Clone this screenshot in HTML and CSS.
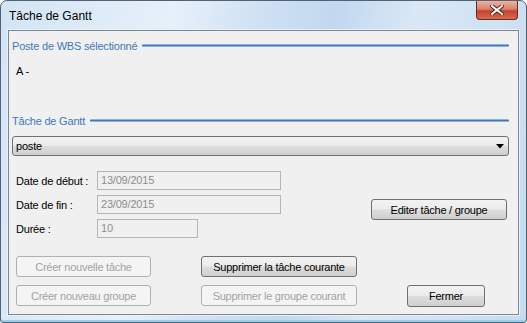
FILE: index.html
```html
<!DOCTYPE html>
<html lang="fr">
<head>
  <meta charset="UTF-8">
  <title>Tâche de Gantt</title>
  <link rel="stylesheet" href="styles.css">
</head>
<body>

<div class="window">
  <div class="titlebar">
    <span class="title">Tâche de Gantt</span>
    <button class="close-btn" title="Fermer">
      <svg width="14" height="10" viewBox="0 0 14 10">
        <path d="M2 1 L12 9 M12 1 L2 9" stroke="#5a2418" stroke-width="4" stroke-linecap="square"/>
        <path d="M2 1 L12 9 M12 1 L2 9" stroke="#ffffff" stroke-width="2" stroke-linecap="square"/>
      </svg>
    </button>
  </div>

  <div class="client">
    <div class="group-head first">
      <span>Poste de WBS sélectionné</span>
      <div class="rule"></div>
    </div>
    <div class="wbs-value">A -</div>

    <div class="group-head second">
      <span>Tâche de Gantt</span>
      <div class="rule"></div>
    </div>
    <div class="combo">
      <span>poste</span>
      <svg class="combo-arrow" width="8" height="5" viewBox="0 0 8 5"><path d="M0 0 H8 L4 4.5 Z" fill="#000"/></svg>
    </div>

    <div class="details">
      <div class="fields">
        <label>Date de début :</label>
        <div class="textbox wide">13/09/2015</div>
        <label>Date de fin :</label>
        <div class="textbox wide">23/09/2015</div>
        <label>Durée :</label>
        <div class="textbox short">10</div>
      </div>
      <button class="btn edit-btn">Editer tâche / groupe</button>
    </div>

    <div class="actions">
      <button class="btn col-a" disabled>Créer nouvelle tâche</button>
      <button class="btn col-b">Supprimer la tâche courante</button>
      <span></span>
      <button class="btn col-a" disabled>Créer nouveau groupe</button>
      <button class="btn col-b" disabled>Supprimer le groupe courant</button>
      <button class="btn close-form">Fermer</button>
    </div>
  </div>
</div>

</body>
</html>
```

FILE: styles.css
```css
* {
  box-sizing: border-box;
}
body {
  margin: 0;
  font-family: "Liberation Sans", Arial, sans-serif;
  background: #ffffff;
}
.window {
  width: 527px;
  height: 323px;
  border: 1px solid #55616e;
  border-radius: 7px 7px 3px 3px;
  padding: 0 7px 7px 7px;
  display: flex;
  flex-direction: column;
  background: linear-gradient(100deg, #d3e4f5 0%, #e6f0fa 30%, #cfe1f3 45%, #c2d8ef 58%, #dae8f6 72%, #c6dbf0 100%);
  box-shadow: inset 0 -2px 0 #8fd3f0;
}
.titlebar {
  height: 29px;
  display: flex;
  align-items: flex-start;
  justify-content: space-between;
}
.title {
  font-size: 12px;
  color: #000;
  margin-top: 8px;
  margin-left: 1px;
}
.close-btn {
  width: 42px;
  height: 19px;
  margin-right: 1px;
  padding: 0;
  border: 1px solid #6b2a1e;
  border-top: none;
  border-radius: 0 0 4px 4px;
  background: linear-gradient(#eab3a4 0%, #d9826d 45%, #c4432b 55%, #d76a50 100%);
  display: flex;
  align-items: center;
  justify-content: center;
}
.client {
  flex: 1;
  background: #f0f0f0;
  border: 1px solid #7d8791;
  outline: 1px solid #e6f1fb;
  font-size: 11px;
  letter-spacing: -0.2px;
  color: #000;
  display: flex;
  flex-direction: column;
  padding: 8px 9px 0 3px;
}
.group-head {
  display: flex;
  align-items: center;
  gap: 5px;
  line-height: 14px;
  color: #3f78bb;
}
.group-head.second {
  margin-top: 36px;
}
.rule {
  flex: 1;
  height: 3px;
  margin-top: -1px;
  border-radius: 1px;
  background: linear-gradient(#b5cfeb, #3d79bd 50%, #b5cfeb);
}
.wbs-value {
  line-height: 14px;
  margin: 11px 0 0 4px;
}
.combo {
  margin-top: 8px;
  height: 20px;
  border: 1px solid #707070;
  border-radius: 3px;
  background: linear-gradient(#f2f2f2 0%, #ebebeb 48%, #dddddd 52%, #cfcfcf 100%);
  display: flex;
  align-items: center;
  justify-content: space-between;
  padding: 0 3px 0 3px;
}
.combo-arrow {
  margin-right: 1px;
}
.details {
  display: flex;
  align-items: flex-start;
  margin-top: 15px;
}
.fields {
  display: grid;
  grid-template-columns: 81px auto;
  grid-auto-rows: 19px;
  row-gap: 5px;
  align-items: center;
  margin-left: 4px;
}
.textbox {
  height: 19px;
  border: 1px solid #b5b5b5;
  background: #f0f0f0;
  color: #8d8d8d;
  padding: 0 3px;
  line-height: 17px;
}
.textbox.wide {
  width: 184px;
}
.textbox.short {
  width: 101px;
}
.btn {
  height: 21px;
  padding: 0;
  font-family: "Liberation Sans", Arial, sans-serif;
  font-size: 11px;
  letter-spacing: -0.25px;
  color: #000;
  border: 1px solid #707070;
  border-radius: 3px;
  background: linear-gradient(#f2f2f2 0%, #ebebeb 48%, #dddddd 52%, #cfcfcf 100%);
}
.btn:disabled {
  color: #a3a3a3;
  border-color: #adb2b5;
  background: #f4f4f4;
}
.edit-btn {
  width: 136px;
  margin: 28px 2px 0 auto;
}
.actions {
  display: grid;
  grid-template-columns: 135px 156px 78px;
  column-gap: 50px;
  row-gap: 8px;
  margin: 18px 0 0 4px;
}
.close-form {
  height: 22px;
}
```
